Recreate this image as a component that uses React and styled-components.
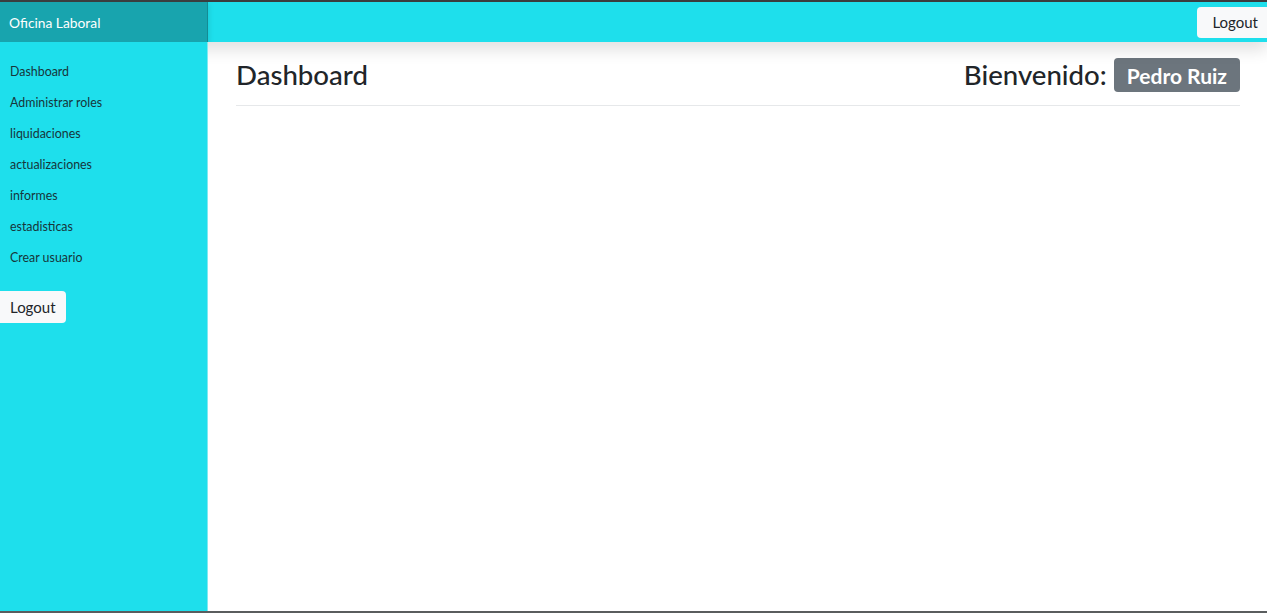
import React from 'react'
import styled, { createGlobalStyle } from 'styled-components'

const GlobalStyle = createGlobalStyle`
  html, body {
    margin: 0;
    padding: 0;
    background: #fff;
  }

  body {
    font-family: Lato, "Noto Sans", "Liberation Sans", sans-serif;
    color: #212529;
  }

  * {
    box-sizing: border-box;
  }
`

const Frame = styled.div`
  height: 613px;
  display: flex;
  flex-direction: column;
  border-top: 2px solid #3a3d3f;
  border-bottom: 2px solid #5a5d5e;
  overflow: hidden;
`

const Navbar = styled.nav`
  height: 40px;
  flex-shrink: 0;
  display: flex;
  background-color: #1edfec;
  box-shadow: 0 8px 16px rgba(0, 0, 0, 0.12);
  position: relative;
  z-index: 2;
  overflow: hidden;
`

const Brand = styled.div`
  width: 208px;
  display: flex;
  align-items: center;
  padding-left: 9px;
  background-color: #18a4ae;
  color: #fff;
  font-size: 13.8px;
  box-shadow: inset -1px 0 0 rgba(0, 0, 0, 0.15), 0 2px 6px rgba(0, 0, 0, 0.15);
`

const NavRight = styled.div`
  flex: 1;
  display: flex;
  justify-content: flex-end;
  align-items: center;
`

const Button = styled.button`
  height: 31px;
  padding: 0 10px;
  border: none;
  border-radius: 4px;
  background-color: #f8f9fa;
  color: #212529;
  font-family: inherit;
  font-size: 15px;
  cursor: pointer;
`

const TopLogout = styled(Button)`
  margin-right: -6px;
  padding: 0 15px;
`

const Body = styled.div`
  flex: 1;
  display: flex;
  min-height: 0;
`

const Sidebar = styled.aside`
  width: 208px;
  flex-shrink: 0;
  padding-top: 14px;
  background-color: #1edfec;
  border-right: 1px solid #7fe9f1;
  position: relative;
  z-index: 3;
`

const SideNav = styled.ul`
  list-style: none;
  margin: 0;
  padding: 0;
`

const SideLink = styled.li`
  height: 31px;
  line-height: 31px;
  padding: 0 9px 0 10px;
  font-size: 12.4px;
  color: #17353a;
`

const SideLogout = styled(Button)`
  margin-top: 18px;
  height: 32px;
  width: 66px;
  padding: 0 0 0 10px;
  text-align: left;
  border-radius: 0 4px 4px 0;
`

const Main = styled.main`
  flex: 1;
  padding: 0 27px 0 28px;
`

const Header = styled.header`
  display: flex;
  justify-content: space-between;
  align-items: center;
  padding: 16px 0 13px;
  border-bottom: 1px solid #e6e8ea;
`

const Title = styled.h2`
  margin: 0;
  font-size: 27.6px;
  font-weight: 500;
  line-height: 34px;
`

const Welcome = styled.div`
  display: flex;
  align-items: center;
  gap: 7px;
`

const Badge = styled.span`
  display: inline-flex;
  align-items: center;
  height: 34px;
  padding: 0 13px;
  border-radius: 4px;
  background-color: #6c757d;
  color: #fff;
  font-size: 21px;
  font-weight: 700;
`

const links = [
  'Dashboard',
  'Administrar roles',
  'liquidaciones',
  'actualizaciones',
  'informes',
  'estadisticas',
  'Crear usuario'
]

const App = () => {
  return (
    <Frame>
      <GlobalStyle />
      <Navbar>
        <Brand>Oficina Laboral</Brand>
        <NavRight>
          <TopLogout>Logout</TopLogout>
        </NavRight>
      </Navbar>
      <Body>
        <Sidebar>
          <SideNav>
            {links.map(link => (
              <SideLink key={link}>{link}</SideLink>
            ))}
          </SideNav>
          <SideLogout>Logout</SideLogout>
        </Sidebar>
        <Main>
          <Header>
            <Title>Dashboard</Title>
            <Welcome>
              <Title>Bienvenido:</Title>
              <Badge>Pedro Ruiz</Badge>
            </Welcome>
          </Header>
        </Main>
      </Body>
    </Frame>
  )
}

export default App
